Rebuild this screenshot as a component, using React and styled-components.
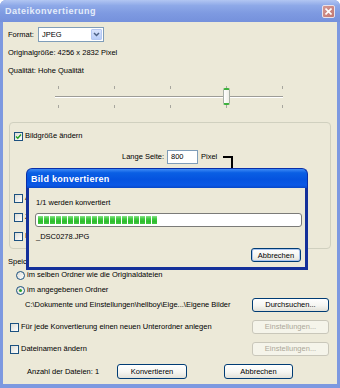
import styled, { createGlobalStyle } from "styled-components";

const GlobalStyle = createGlobalStyle`
  html, body {
    margin: 0;
    padding: 0;
    background: #ffffff;
  }
`;

const Window = styled.div`
  position: relative;
  width: 340px;
  height: 388px;
  box-sizing: border-box;
  display: flex;
  flex-direction: column;
  background: #7d99e0;
  border-radius: 6px 6px 0 0;
  overflow: hidden;
  font-family: "Liberation Sans", Arial, sans-serif;
  font-size: 7.5px;
  color: #000000;
`;

const TitleBar = styled.div`
  flex: none;
  height: 22px;
  box-sizing: border-box;
  display: flex;
  align-items: center;
  justify-content: space-between;
  padding: 0 5px;
  background: linear-gradient(#b2c6f2, #8ea9e8 25%, #7e9ae1 60%, #7591dc);
`;

const Title = styled.span`
  color: #e4ecfa;
  font-weight: bold;
  font-size: 9px;
  letter-spacing: 0.5px;
`;

const CloseButton = styled.div`
  width: 13px;
  height: 13px;
  box-sizing: border-box;
  border: 1px solid #e9e2ea;
  border-radius: 2px;
  background: linear-gradient(135deg, #d49893, #c27872);
  display: flex;
  align-items: center;
  justify-content: center;
`;

const Body = styled.div`
  flex: 1;
  margin: 0 3px 4px 3px;
  padding: 0 0 0 5px;
  background: #ece9d8;
  display: flex;
  flex-direction: column;
`;

const Row = styled.div`
  display: flex;
  align-items: center;
  flex: none;
  height: ${(p) => p.$h || 12}px;
  margin-top: ${(p) => p.$top || 0}px;
  padding-left: ${(p) => p.$indent || 0}px;
  line-height: 12px;
  white-space: nowrap;
`;

const FieldLabel = styled.span`
  width: ${(p) => p.$w}px;
  flex: none;
`;

const Select = styled.div`
  position: relative;
  width: 66px;
  height: 15px;
  box-sizing: border-box;
  border: 1px solid #7f9db9;
  background: #ffffff;
  display: flex;
  align-items: center;
  padding-left: 3px;
`;

const DropButton = styled.div`
  position: absolute;
  right: 1px;
  top: 1px;
  width: 11px;
  height: 11px;
  box-sizing: border-box;
  border-radius: 1px;
  background: linear-gradient(#d8e3fc, #b9cdf8);
  border: 1px solid #b5c8f2;
  display: flex;
  align-items: center;
  justify-content: center;
`;

const Slider = styled.div`
  flex: none;
  width: 228px;
  margin: 9px 0 0 47px;
  display: flex;
  flex-direction: column;
`;

const Ticks = styled.div`
  height: 3px;
  padding-left: 3px;
  display: flex;
  justify-content: space-between;
`;

const Tick = styled.span`
  width: 1px;
  height: 3px;
  background: #a7a69e;
`;

const TrackArea = styled.div`
  position: relative;
  height: 16px;
  display: flex;
  align-items: center;
`;

const Track = styled.div`
  width: 100%;
  height: 2px;
  box-sizing: border-box;
  border-top: 1px solid #9d9c97;
  border-bottom: 1px solid #ffffff;
  background: #d6d3c4;
`;

const Thumb = styled.div`
  position: absolute;
  top: -1px;
  width: 7px;
  height: 17px;
  box-sizing: border-box;
  border: 1px solid #a9b0a6;
  border-top: 2px solid #3db13d;
  border-bottom: 2px solid #3db13d;
  border-radius: 2px;
  background: linear-gradient(90deg, #ffffff, #f0efe8);
`;

const GroupBox = styled.div`
  flex: none;
  height: 127px;
  box-sizing: border-box;
  margin: 14px 6px 0 1px;
  border: 1px solid #d0d0bf;
  border-radius: 4px;
  padding-left: 4px;
  display: flex;
  flex-direction: column;
`;

const Checkbox = styled.span`
  width: 9px;
  height: 9px;
  flex: none;
  box-sizing: border-box;
  border: 1px solid #1c5180;
  background: linear-gradient(135deg, #dcdcd5, #ffffff);
  display: inline-flex;
  align-items: center;
  justify-content: center;
  margin-right: 2px;
`;

const Radio = styled.span`
  width: 9px;
  height: 9px;
  flex: none;
  box-sizing: border-box;
  border: 1px solid #1c5180;
  border-radius: 50%;
  background: linear-gradient(135deg, #dcdcd5, #ffffff);
  display: inline-flex;
  align-items: center;
  justify-content: center;
  margin-right: 2px;
  &::after {
    content: "";
    display: ${(p) => (p.$checked ? "block" : "none")};
    width: 3px;
    height: 3px;
    border-radius: 50%;
    background: #2aa52a;
  }
`;

const TextInput = styled.div`
  width: 31px;
  height: 14px;
  box-sizing: border-box;
  border: 1px solid #7f9db9;
  background: #ffffff;
  padding-left: 3px;
  display: flex;
  align-items: center;
  margin-right: 3px;
`;

const Bracket = styled.span`
  align-self: flex-start;
  margin: 6px 0 0 6px;
  width: 8px;
  height: 18px;
  flex: none;
  border-top: 2px solid #000000;
  border-right: 2px solid #000000;
`;

const Button = styled.div`
  width: ${(p) => p.$w}px;
  height: 14px;
  flex: none;
  box-sizing: border-box;
  border: 1px solid ${(p) => (p.$disabled ? "#c9c7ba" : "#003c74")};
  border-radius: 3px;
  background: ${(p) =>
    p.$disabled ? "#f5f4ea" : "linear-gradient(#ffffff, #f5f5f1 55%, #e2e1d9)"};
  color: ${(p) => (p.$disabled ? "#aca899" : "#000000")};
  box-shadow: ${(p) => (p.$default ? "inset 0 0 0 1px #a9c4ef" : "none")};
  display: flex;
  align-items: center;
  justify-content: center;
  margin-left: ${(p) => (p.$push ? "auto" : "0")};
  margin-right: ${(p) => p.$mr || 0}px;
`;

const BottomRow = styled.div`
  flex: none;
  height: 15px;
  margin-top: 8px;
  padding-left: 19px;
  display: grid;
  grid-template-columns: 53px 70px 69px;
  column-gap: 37px;
  align-items: center;
  white-space: nowrap;
  & > div {
    height: 15px;
  }
`;

const Dialog = styled.div`
  position: absolute;
  left: 26px;
  top: 168px;
  width: 282px;
  display: flex;
  flex-direction: column;
`;

const DialogTitle = styled.div`
  height: 20px;
  box-sizing: border-box;
  padding-left: 4px;
  display: flex;
  align-items: center;
  border-radius: 6px 6px 0 0;
  background: linear-gradient(#3e8bf5, #0a5fe4 20%, #0553df 55%, #0a58e6 85%, #0847c8);
  border: 1px solid #0a2fa8;
  border-bottom: none;
`;

const DialogTitleText = styled.span`
  color: #ffffff;
  font-weight: bold;
  font-size: 9px;
  letter-spacing: 0.3px;
`;

const DialogBody = styled.div`
  background: #ece9d8;
  border: 3px solid #14309a;
  border-top: none;
  padding: 9px 0 5px 6px;
  display: flex;
  flex-direction: column;
`;

const DialogLine = styled.div`
  height: 12px;
  line-height: 12px;
  padding-left: 1px;
  margin-top: ${(p) => p.$top || 0}px;
`;

const Progress = styled.div`
  width: 267px;
  height: 14px;
  box-sizing: border-box;
  margin-top: 4px;
  border: 1px solid #7b7b78;
  border-radius: 3px;
  background: #ffffff;
  padding: 2px;
`;

const ProgressFill = styled.div`
  height: 8px;
  background: repeating-linear-gradient(90deg, transparent 0 5px, #ffffff 5px 6px),
    linear-gradient(#8be08b, #3ecb3e 35%, #2dbb2d 70%, #45c945);
`;

const DialogButtonRow = styled.div`
  display: flex;
  justify-content: flex-end;
  margin-top: 5px;
  padding-right: 4px;
`;

function CheckMark() {
  return (
    <svg width="7" height="7" viewBox="0 0 7 7">
      <polyline points="1,3.5 2.8,5.3 6,1.5" fill="none" stroke="#21a121" strokeWidth="1.4" />
    </svg>
  );
}

export default function App() {
  const done = 1;
  const total = 1;
  const fillWidth = Math.round(261 * 0.46 * (done / total));
  return (
    <>
      <GlobalStyle />
      <Window>
        <TitleBar>
          <Title>Dateikonvertierung</Title>
          <CloseButton>
            <svg width="7" height="7" viewBox="0 0 7 7">
              <path d="M0.5 0.5 L6.5 6.5 M6.5 0.5 L0.5 6.5" stroke="#ffffff" strokeWidth="1.6" />
            </svg>
          </CloseButton>
        </TitleBar>
        <Body>
          <Row $h={15} $top={5}>
            <FieldLabel $w={30}>Format:</FieldLabel>
            <Select>
              JPEG
              <DropButton>
                <svg width="7" height="5" viewBox="0 0 7 5">
                  <polyline points="1,1 3.5,3.5 6,1" fill="none" stroke="#4d6185" strokeWidth="1.5" />
                </svg>
              </DropButton>
            </Select>
          </Row>
          <Row $top={5}>Originalgröße: 4256 x 2832 Pixel</Row>
          <Row $top={6}>Qualität: Hohe Qualität</Row>
          <Slider>
            <Ticks>
              <Tick /><Tick /><Tick /><Tick /><Tick />
            </Ticks>
            <TrackArea>
              <Track />
              <Thumb style={{ left: 168 }} />
            </TrackArea>
            <Ticks>
              <Tick /><Tick /><Tick /><Tick /><Tick />
            </Ticks>
          </Slider>
          <GroupBox>
            <Row $top={7}>
              <Checkbox><CheckMark /></Checkbox>
              Bildgröße ändern
            </Row>
            <Row $h={14} $top={8} $indent={108}>
              <FieldLabel $w={45}>Lange Seite:</FieldLabel>
              <TextInput>800</TextInput>
              Pixel
              <Bracket />
            </Row>
            <Row $top={28}>
              <Checkbox />
              Auflösung ändern
            </Row>
            <Row $top={7}>
              <Checkbox />
              Zusatzinformationen entfernen
            </Row>
            <Row $top={7}>
              <Checkbox />
              ICC-Profil einbetten
            </Row>
          </GroupBox>
          <Row $top={7}>Speicherort</Row>
          <Row $top={1} $indent={8}>
            <Radio />
            im selben Ordner wie die Originaldateien
          </Row>
          <Row $top={3} $indent={8}>
            <Radio $checked />
            im angegebenen Ordner
          </Row>
          <Row $h={14} $top={2} $indent={17}>
            C:\Dokumente und Einstellungen\hellboy\Eige...\Eigene Bilder
            <Button $w={77} $push $mr={8}>Durchsuchen...</Button>
          </Row>
          <Row $h={14} $top={8} $indent={2}>
            <Checkbox />
            Für jede Konvertierung einen neuen Unterordner anlegen
            <Button $w={77} $push $mr={8} $disabled>Einstellungen...</Button>
          </Row>
          <Row $h={14} $top={8} $indent={2}>
            <Checkbox />
            Dateinamen ändern
            <Button $w={77} $push $mr={8} $disabled>Einstellungen...</Button>
          </Row>
          <BottomRow>
            <span>Anzahl der Dateien: 1</span>
            <Button $w={70}>Konvertieren</Button>
            <Button $w={69}>Abbrechen</Button>
          </BottomRow>
        </Body>
        <Dialog>
          <DialogTitle>
            <DialogTitleText>Bild konvertieren</DialogTitleText>
          </DialogTitle>
          <DialogBody>
            <DialogLine>{done}/{total} werden konvertiert</DialogLine>
            <Progress>
              <ProgressFill style={{ width: fillWidth }} />
            </Progress>
            <DialogLine $top={4}>_DSC0278.JPG</DialogLine>
            <DialogButtonRow>
              <Button $w={50} $default>Abbrechen</Button>
            </DialogButtonRow>
          </DialogBody>
        </Dialog>
      </Window>
    </>
  );
}
